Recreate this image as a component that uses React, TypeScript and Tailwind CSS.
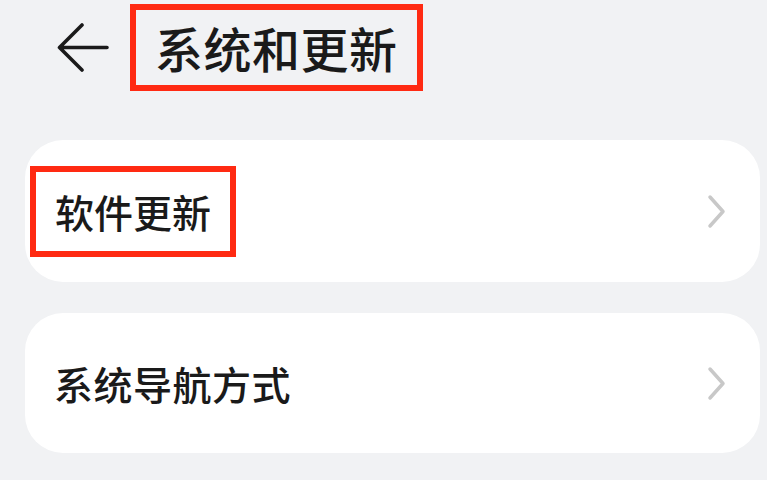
const font = { fontFamily: '"Noto Sans CJK SC", "Noto Sans", sans-serif' };

const Chevron = () => (
  <svg width="20" height="35" viewBox="0 0 20 35" fill="none" className="ml-auto">
    <path d="M4 3 L17 17.5 L4 32" stroke="#c8c8c8" strokeWidth="3.5" strokeLinecap="round" strokeLinejoin="round" />
  </svg>
);

const BackArrow = () => (
  <svg width="52" height="49" viewBox="0 0 52 49" fill="none">
    <path d="M25 2 L2.5 24.5 L25 47 M2.5 24.5 H50" stroke="#1a1a1a" strokeWidth="3.6" strokeLinecap="round" strokeLinejoin="round" />
  </svg>
);

export default function App() {
  return (
    <div className="w-[767px] h-[480px] overflow-hidden bg-[#f1f2f4] text-[#1a1a1a]" style={font}>
      {/* Header */}
      <div className="h-[95px] flex items-center pl-[57px]">
        <BackArrow />
        <div className="ml-[21px] border-[6px] border-[#ff2a12] px-[19px] py-[13px]">
          <span className="block text-[48px] leading-[49px] font-medium tracking-[0.5px]">系统和更新</span>
        </div>
      </div>

      {/* Software update */}
      <div className="mt-[45px] ml-[25px] w-[735px] h-[142px] rounded-[38px] bg-white flex items-center pl-[5px] pr-[34px]">
        <div className="border-[6px] border-[#ff2a12] px-[19px] py-[20px]">
          <span className="block text-[39px] leading-[39px] font-medium">软件更新</span>
        </div>
        <Chevron />
      </div>

      {/* Navigation */}
      <div className="mt-[31px] ml-[25px] w-[735px] h-[140px] rounded-[38px] bg-white flex items-center pl-[29px] pr-[34px]">
        <span className="block text-[39px] leading-[39px] font-medium tracking-[0.5px]">系统导航方式</span>
        <Chevron />
      </div>
    </div>
  );
}
